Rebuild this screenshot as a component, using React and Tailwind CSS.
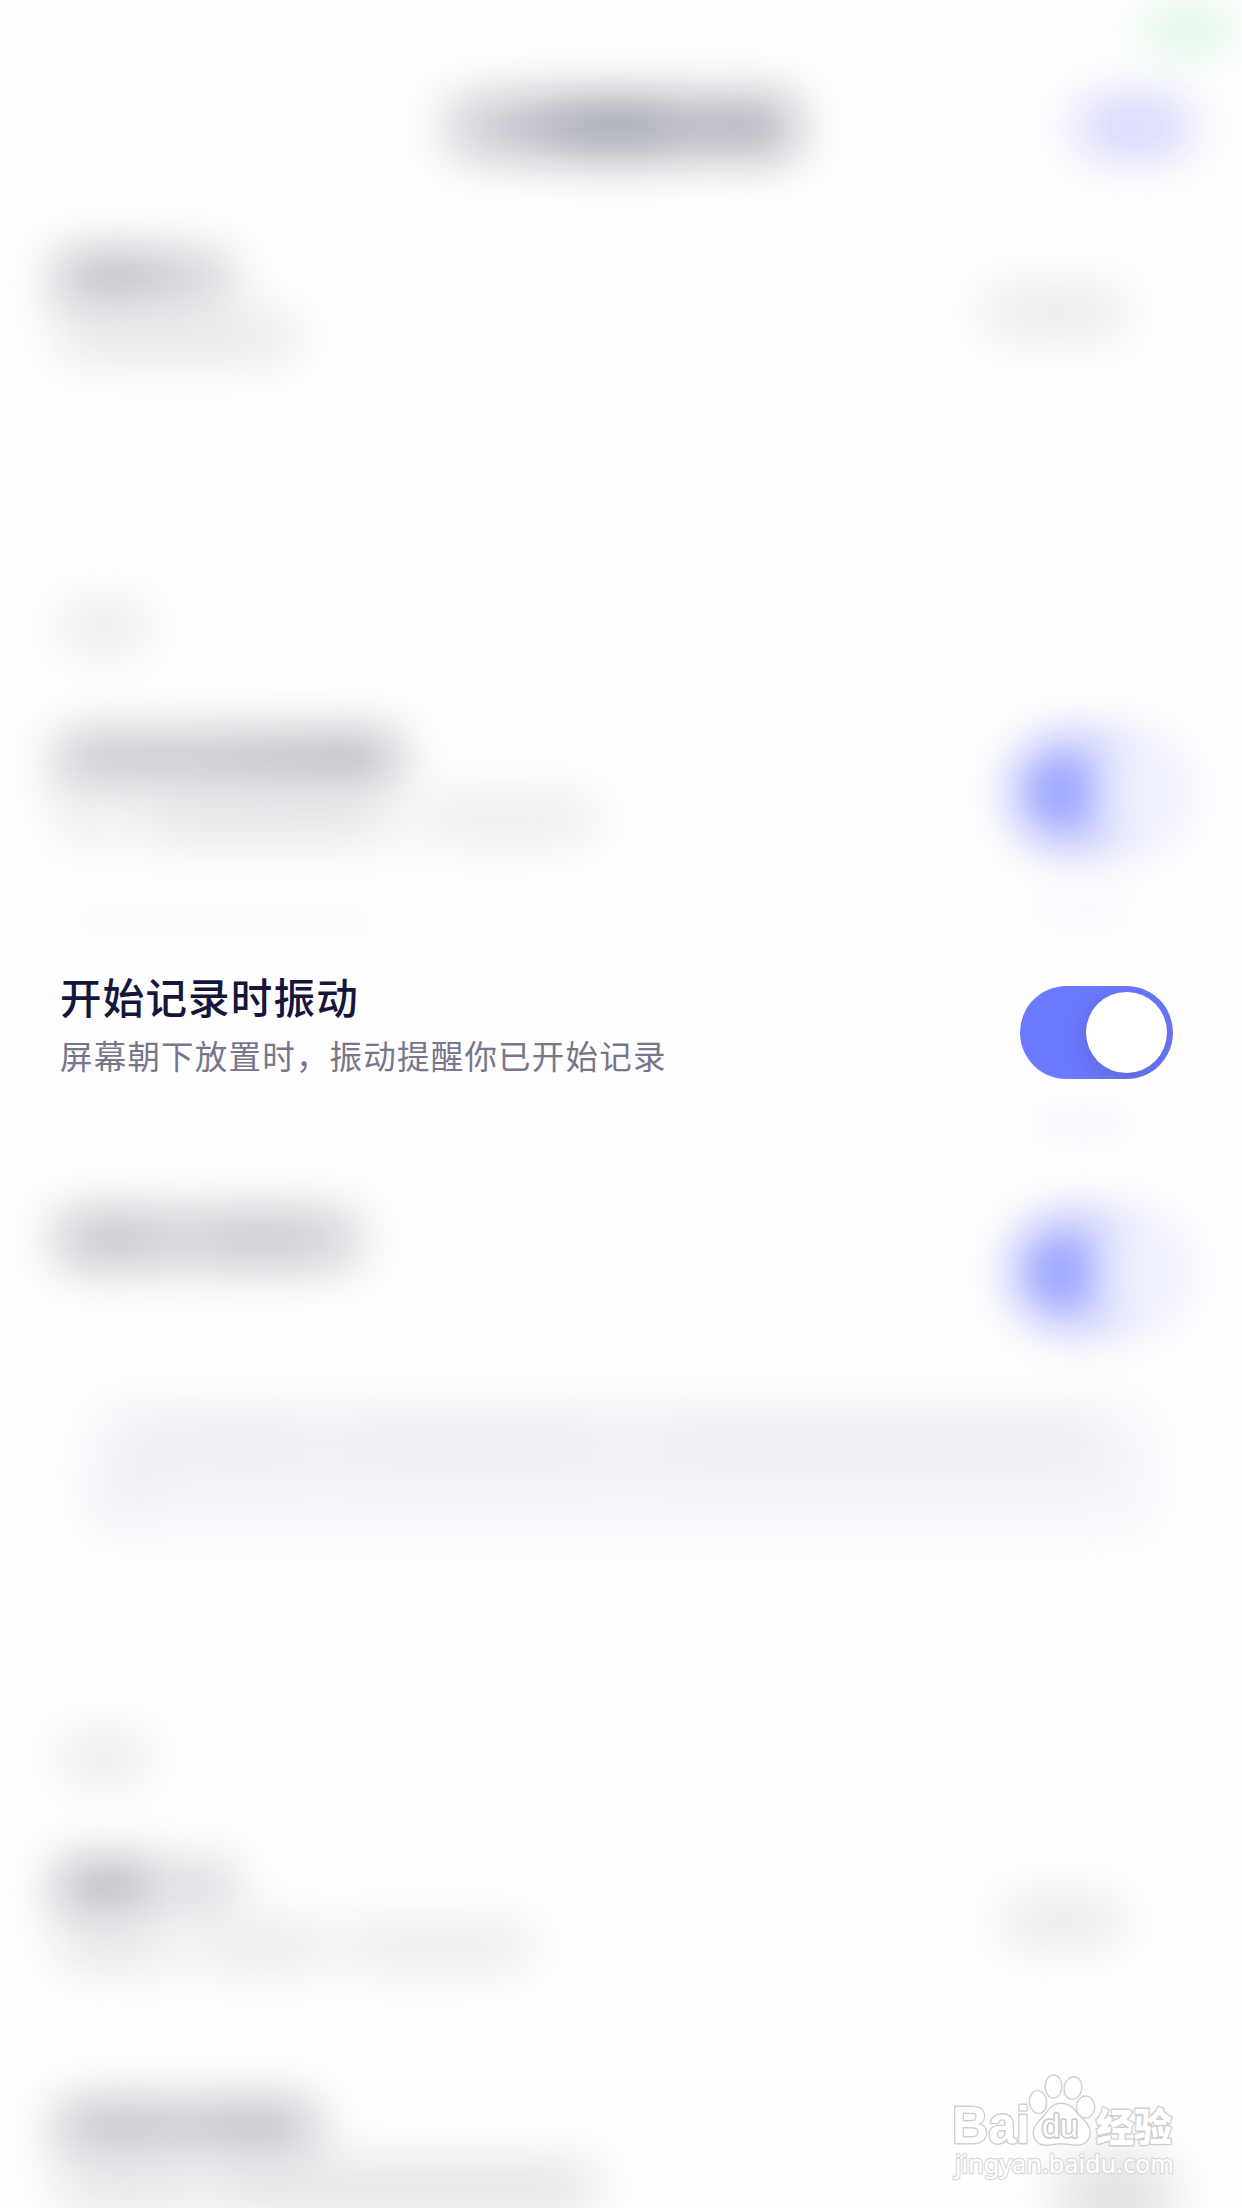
const SANS = "font-['Noto_Sans_CJK_SC','Noto_Sans',sans-serif]";

// A soft line of out-of-focus text; every part is a [width, class] pair.
function SoftLine({ parts, className }) {
  return (
    <div className={`flex ${className}`}>
      {parts.map(([width, tone], i) => (
        <div key={i} className={`h-full ${tone}`} style={{ width }} />
      ))}
    </div>
  );
}

function Switch({ soft }) {
  return (
    <div
      className={`flex h-[93px] w-[153px] shrink-0 items-center justify-end overflow-hidden rounded-full pr-[6px] ${soft ? "bg-[#808bff] blur-[27px]" : "mt-[2px] bg-[#6c79ff]"}`}
    >
      <div
        className={`size-[81px] rounded-full bg-white ${soft ? "" : "shadow-[0_6px_24px_rgba(60,60,110,0.3)]"}`}
      />
    </div>
  );
}

function SoftRow({ title, sub, children }) {
  return (
    <div className="flex h-[239.5px] shrink-0 items-center justify-between pr-[69px] pl-[60px]">
      <div className="flex flex-col gap-[23px] pb-[10px]">
        <SoftLine parts={title} className="h-[38px] blur-[27px]" />
        <SoftLine parts={sub} className="h-[32px] blur-[27px]" />
      </div>
      {children}
    </div>
  );
}

function SectionLabel() {
  return <div className="ml-[62px] h-[30px] w-[84px] shrink-0 bg-[#dddde2] blur-[27px]" />;
}

function Watermark() {
  return (
    <svg
      className="absolute top-[2065px] left-[935px] h-[143px] w-[260px] overflow-visible"
      viewBox="935 2065 260 143"
      fill="#ffffff"
      stroke="#d0d0d0"
      strokeWidth="2.8"
      strokeLinejoin="round"
      style={{ paintOrder: "stroke" }}
    >
      <text x="952" y="2143" fontFamily="Liberation Sans" fontWeight="700" fontSize="51" textLength="78" lengthAdjust="spacingAndGlyphs">
        Bai
      </text>
      <g strokeWidth="2.8">
        <ellipse cx="1038" cy="2102" rx="8" ry="10.700" transform="rotate(-6 1038 2102)" />
        <ellipse cx="1053.5" cy="2086.5" rx="7.700" ry="10.800" />
        <ellipse cx="1073" cy="2088" rx="8.200" ry="10.600" transform="rotate(12 1073 2088)" />
        <ellipse cx="1085.5" cy="2107" rx="8.500" ry="10.300" />
        <path d="M1061 2104c-7 0-11 4-14 9-4 6-13 11-13 20 0 7 5 11.500 12 11.500 6 0 9-1.500 15-1.500s10 1.500 16 1.500c7 0 12.500-4.500 12.500-12 0-9-9-14-13.500-20-3.500-5-8-8.500-15-8.500z" />
      </g>
      <text x="1042" y="2137" fontFamily="Liberation Sans" fontSize="31" strokeWidth="3.4" stroke="#cccccc" textLength="36" lengthAdjust="spacingAndGlyphs">
        du
      </text>
      <text x="1096" y="2141" fontFamily="Noto Sans CJK SC" fontWeight="900" fontSize="39" textLength="76" lengthAdjust="spacingAndGlyphs">
        经验
      </text>
      <text x="955" y="2173" fontFamily="Noto Sans" fontSize="26" strokeWidth="2.6" stroke="#dadada" textLength="219" lengthAdjust="spacingAndGlyphs">
        jingyan.baidu.com
      </text>
    </svg>
  );
}

export default function App() {
  return (
    <div className={`relative flex h-[2208px] w-[1242px] flex-col overflow-hidden bg-[#fefefe] ${SANS}`}>
      <header className="flex h-[192px] shrink-0 flex-col">
        <div className="mt-[12px] mr-[12px] h-[34px] w-[84px] self-end bg-[#d2f5db] blur-[24px]" />
        <div className="mt-[58px] flex h-[46px] items-center justify-between pr-[56px] pl-[452px]">
          <SoftLine
            parts={[[60, "bg-[#b8b7c2]"], [50, "bg-[#a1a0af]"], [106, "bg-[#868997]"], [68, "bg-[#a09fac]"], [56, "bg-[#9594a3]"]]}
            className="h-[46px] blur-[27px]"
          />
          <div className="h-[42px] w-[104px] bg-[#c2c2ff] blur-[27px]" />
        </div>
      </header>

      <SoftRow
        title={[[95, "bg-[#9f9eab]"], [72, "bg-[#b9b8c3]"]]}
        sub={[[235, "bg-[#dcdce0]"]]}
      >
        <div className="mr-[49px] h-[34px] w-[138px] bg-[#e0e0e4] blur-[27px]" />
      </SoftRow>

      <div className="flex h-[241px] shrink-0 flex-col justify-end pb-[31px]">
        <SectionLabel />
      </div>

      <SoftRow
        title={[[175, "bg-[#acabb6]"], [100, "bg-[#a3a2ae]"], [60, "bg-[#9897a5]"]]}
        sub={[[50, "bg-[#e2e2e6]"], [35, "bg-[#f4f4f6]"], [235, "bg-[#dadade]"], [50, "bg-[#f3f3f5]"], [165, "bg-[#e3e3e6]"]]}
      >
        <Switch soft />
      </SoftRow>

      <div className="relative flex h-[239.5px] shrink-0 items-center justify-between pr-[69px] pl-[60px]">
        <div className="absolute top-[0px] left-[80px] h-[20px] w-[290px] bg-[#f9f9fa] blur-[14px]" />
        <div className="absolute top-[-14px] right-[115px] h-[24px] w-[90px] bg-[#f7f6ff] blur-[18px]" />
        <div className="absolute bottom-[16px] right-[115px] h-[24px] w-[90px] bg-[#f4f3ff] blur-[18px]" />
        <div className="flex flex-col pb-[12px] whitespace-nowrap">
          <div className="text-[41.5px] leading-[59px] font-medium tracking-[1.2px] text-[#16163a]">开始记录时振动</div>
          <div className="text-[32.5px] leading-[58px] tracking-[1.2px] text-[#77768a]">屏幕朝下放置时，振动提醒你已开始记录</div>
        </div>
        <Switch />
      </div>

      <SoftRow
        title={[[95, "bg-[#a7a6b2]"], [60, "bg-[#bbbac5]"], [80, "bg-[#aaa9b5]"], [60, "bg-[#b5b4bf]"]]}
        sub={[]}
      >
        <Switch soft />
      </SoftRow>

      <div className="mx-[88px] mt-[16px] flex h-[124px] shrink-0 flex-col gap-[27px] bg-[#f4f5fb] pt-[17px] blur-[27px]">
        <SoftLine
          parts={[[95, "bg-[#e6e6ec]"], [70, "bg-[#e3e3e9]"], [65, "bg-[#ebecf2]"], [240, "bg-[#e4e4ea]"], [70, "bg-[#edeef4]"], [430, "bg-[#e4e3ea]"]]}
          className="ml-[38px] h-[28px]"
        />
        <div className="ml-[10px] h-[28px] w-[50px] bg-[#e8eaf0]" />
      </div>

      <div className="flex h-[270px] shrink-0 flex-col justify-end pb-[29px]">
        <SectionLabel />
      </div>

      <SoftRow
        title={[[95, "bg-[#9796a4]"], [25, "bg-[#f4f4f6]"], [50, "bg-[#c1c0ca]"]]}
        sub={[[100, "bg-[#dcdce0]"], [50, "bg-[#efeff2]"], [110, "bg-[#dfdfe3]"], [30, "bg-[#f6f6f8]"], [180, "bg-[#e2e2e5]"]]}
      >
        <div className="mr-[53px] h-[34px] w-[116px] bg-[#dfdfe3] blur-[27px]" />
      </SoftRow>

      <SoftRow
        title={[[100, "bg-[#a8a7b3]"], [55, "bg-[#b0afba]"], [98, "bg-[#a3a2ae]"]]}
        sub={[[120, "bg-[#dadade]"], [50, "bg-[#e5e5e9]"], [365, "bg-[#d5d5da]"]]}
      >
        <div className="mt-[70px] h-[70px] w-[116px] rounded-full bg-[#dcdcde] blur-[28px]" />
      </SoftRow>

      <Watermark />
    </div>
  );
}
